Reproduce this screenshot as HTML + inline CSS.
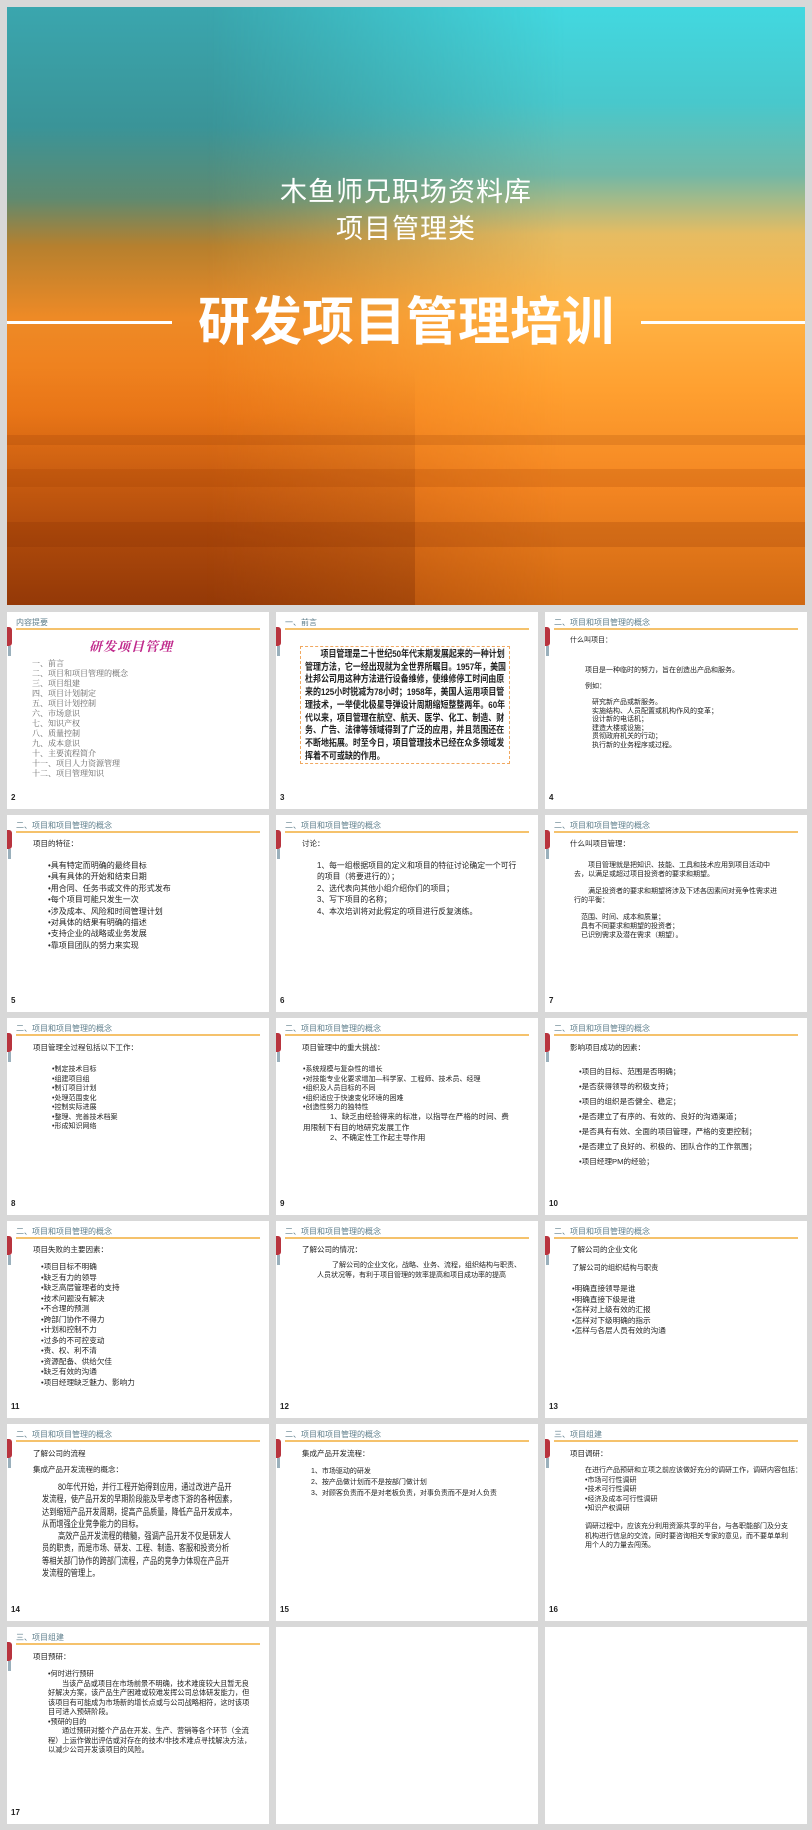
<!DOCTYPE html>
<html><head><meta charset="utf-8"><style>
*{margin:0;padding:0;box-sizing:border-box}
body{width:812px;height:1830px;background:#d8d8d8;position:relative;overflow:hidden;font-family:"Liberation Sans","Noto Sans CJK SC",sans-serif;color:#222}
#hero{position:absolute;left:7px;top:7px;width:798px;height:598px;overflow:hidden;
background:linear-gradient(180deg,#3aa6ae 0%,#3a9498 20%,#5f8a70 32%,#b6802e 40%,#ee8a26 52%,#f07a18 68%,#c85a10 85%,#a4420a 100%)}
#hero .tr{position:absolute;left:0;top:0;width:100%;height:100%;background:linear-gradient(180deg,#42d8e0 0%,#48c8cc 16%,#72b8a6 28%,#e6bc62 38%,#ffb446 50%,#ffa030 64%,#f48622 80%,#d06812 100%);
-webkit-mask-image:linear-gradient(90deg,transparent 25%,#000 70%);mask-image:linear-gradient(90deg,transparent 25%,#000 70%)}
#hero .dl{position:absolute;left:0;top:360px;width:408px;height:238px;background:linear-gradient(180deg,rgba(120,40,0,0),rgba(110,35,0,.3))}
.band{position:absolute;left:0;width:100%}
.sub{position:absolute;left:0;width:100%;text-align:center;color:#fff;font-size:27px;letter-spacing:1px}
.ttl{position:absolute;left:0;width:100%;text-align:center;color:#fff;font-size:52px;font-weight:bold;top:284px;line-height:64px}
.ln{position:absolute;top:314px;height:3px;background:#fff}
.s{position:absolute;width:262px;height:197px;background:#fff;overflow:hidden;font-size:8px;line-height:1}
.s .h{position:absolute;left:9px;top:7px;font-size:8px;color:#5f7f8c}
.s .bar{position:absolute;left:9px;top:16px;width:244px;height:2px;background:#f5c26c}
.s .d1{position:absolute;left:0;top:15px;width:5px;height:19px;background:#b8343e;border-radius:0 3px 3px 0}
.s .d2{position:absolute;left:1px;top:34px;width:3px;height:10px;background:#9ab0bc}
.s .n{position:absolute;left:4px;bottom:7px;font-size:8px;font-weight:bold}
.t{position:absolute;white-space:nowrap}
.p{position:absolute;white-space:normal}
.c{position:absolute;white-space:nowrap;transform-origin:0 0}
</style></head><body>
<div id="hero">
<div class="tr"></div>
<div class="dl"></div>
<div class="band" style="top:428px;height:10px;background:rgba(120,40,0,.15)"></div>
<div class="band" style="top:462px;height:18px;background:rgba(150,55,0,.18)"></div>
<div class="band" style="top:515px;height:25px;background:rgba(120,40,0,.18)"></div>
<div class="sub" style="top:163px">木鱼师兄职场资料库</div>
<div class="sub" style="top:200px">项目管理类</div>
<div class="ln" style="left:0;width:165px"></div>
<div class="ln" style="left:634px;width:164px"></div>
<div class="ttl">研发项目管理培训</div>
</div>

<div class="s" style="left:7px;top:612px"><div class="h">内容提要</div><div class="bar"></div><div class="d1"></div><div class="d2"></div>
<div class="t" style="left:82px;top:27px;font-size:13px;font-weight:bold;color:#c02a8c;font-family:'Noto Serif CJK SC',serif;font-style:italic;letter-spacing:1px">研发项目管理</div>
<div class="p" style="left:25px;top:47px;line-height:10px;color:#666;font-family:'Noto Serif CJK SC',serif">一、前言<br>二、项目和项目管理的概念<br>三、项目组建<br>四、项目计划制定<br>五、项目计划控制<br>六、市场意识<br>七、知识产权<br>八、质量控制<br>九、成本意识<br>十、主要流程简介<br>十一、项目人力资源管理<br>十二、项目管理知识</div>
<div class="n">2</div></div>

<div class="s" style="left:276px;top:612px"><div class="h">一、前言</div><div class="bar"></div><div class="d1"></div><div class="d2"></div>
<div style="position:absolute;left:24px;top:34px;width:210px;height:118px;border:1px dashed #f0a860"></div>
<div class="c" style="left:29px;top:36px;font-size:9.4px;line-height:12.7px;font-weight:bold;transform:scaleX(.85)">&nbsp;&nbsp;&nbsp;&nbsp;&nbsp;&nbsp;&nbsp;项目管理是二十世纪50年代末期发展起来的一种计划<br>管理方法，它一经出现就为全世界所瞩目。1957年，美国<br>杜邦公司用这种方法进行设备维修，使维修停工时间由原<br>来的125小时锐减为78小时；1958年，美国人运用项目管<br>理技术，一举使北极星导弹设计周期缩短整整两年。60年<br>代以来，项目管理在航空、航天、医学、化工、制造、财<br>务、广告、法律等领域得到了广泛的应用，并且范围还在<br>不断地拓展。时至今日，项目管理技术已经在众多领域发<br>挥着不可或缺的作用。</div>
<div class="n">3</div></div>

<div class="s" style="left:545px;top:612px"><div class="h">二、项目和项目管理的概念</div><div class="bar"></div><div class="d1"></div><div class="d2"></div>
<div class="t" style="left:25px;top:25px;font-size:7px">什么叫项目：</div>
<div class="t" style="left:40px;top:55px;font-size:7px">项目是一种临时的努力，旨在创造出产品和服务。</div>
<div class="t" style="left:40px;top:71px;font-size:7px">例如：</div>
<div class="p" style="left:47px;top:87px;font-size:7px;line-height:8.5px">研究新产品或新服务。<br>实施结构、人员配置或机构作风的变革；<br>设计新的电话机；<br>建造大楼或设施；<br>贯彻政府机关的行动；<br>执行新的业务程序或过程。</div>
<div class="n">4</div></div>

<div class="s" style="left:7px;top:815px"><div class="h">二、项目和项目管理的概念</div><div class="bar"></div><div class="d1"></div><div class="d2"></div>
<div class="t" style="left:26px;top:25px;font-size:7.5px">项目的特征：</div>
<div class="p" style="left:41px;top:45px;line-height:11.4px;font-size:8px">•具有特定而明确的最终目标<br>•具有具体的开始和结束日期<br>•用合同、任务书或文件的形式发布<br>•每个项目可能只发生一次<br>•涉及成本、风险和时间管理计划<br>•对具体的结果有明确的描述<br>•支持企业的战略或业务发展<br>•靠项目团队的努力来实现</div>
<div class="n">5</div></div>

<div class="s" style="left:276px;top:815px"><div class="h">二、项目和项目管理的概念</div><div class="bar"></div><div class="d1"></div><div class="d2"></div>
<div class="t" style="left:26px;top:25px;font-size:7.5px">讨论：</div>
<div class="p" style="left:41px;top:45px;line-height:11.4px;font-size:7.8px;width:205px">1、每一组根据项目的定义和项目的特征讨论确定一个可行的项目（将要进行的）；<br>2、选代表向其他小组介绍你们的项目；<br>3、写下项目的名称；<br>4、本次培训将对此假定的项目进行反复演练。</div>
<div class="n">6</div></div>

<div class="s" style="left:545px;top:815px"><div class="h">二、项目和项目管理的概念</div><div class="bar"></div><div class="d1"></div><div class="d2"></div>
<div class="t" style="left:25px;top:25px;font-size:7.5px">什么叫项目管理：</div>
<div class="p" style="left:29px;top:46px;width:205px;font-size:7px;line-height:9px;text-indent:14px">项目管理就是把知识、技能、工具和技术应用到项目活动中去，以满足或超过项目投资者的要求和期望。</div>
<div class="p" style="left:29px;top:72px;width:205px;font-size:7px;line-height:9px;text-indent:14px">满足投资者的要求和期望将涉及下述各因素间对竞争性需求进行的平衡：</div>
<div class="p" style="left:36px;top:98px;font-size:7px;line-height:9px">范围、时间、成本和质量；<br>具有不同要求和期望的投资者；<br>已识别需求及潜在需求（期望）。</div>
<div class="n">7</div></div>

<div class="s" style="left:7px;top:1018px"><div class="h">二、项目和项目管理的概念</div><div class="bar"></div><div class="d1"></div><div class="d2"></div>
<div class="t" style="left:26px;top:26px;font-size:7.5px">项目管理全过程包括以下工作：</div>
<div class="p" style="left:45px;top:47px;line-height:9.5px;font-size:7px">•制定技术目标<br>•组建项目组<br>•制订项目计划<br>•处理范围变化<br>•控制实际进展<br>•整理、完善技术档案<br>•形成知识网络</div>
<div class="n">8</div></div>

<div class="s" style="left:276px;top:1018px"><div class="h">二、项目和项目管理的概念</div><div class="bar"></div><div class="d1"></div><div class="d2"></div>
<div class="t" style="left:26px;top:26px;font-size:7.5px">项目管理中的重大挑战：</div>
<div class="p" style="left:27px;top:47px;line-height:9.5px;font-size:7px">•系统规模与复杂性的增长<br>•对技能专业化要求增加—科学家、工程师、技术员、经理<br>•组织及人员目标的不同<br>•组织适应于快速变化环境的困难<br>•创造性努力的独特性</div>
<div class="p" style="left:27px;top:94px;width:212px;line-height:10.5px;font-size:7.6px;text-indent:27px">1、缺乏由经验得来的标准，以指导在严格的时间、费用限制下有目的地研究发展工作</div>
<div class="t" style="left:54px;top:116px;font-size:7.6px">2、不确定性工作起主导作用</div>
<div class="n">9</div></div>

<div class="s" style="left:545px;top:1018px"><div class="h">二、项目和项目管理的概念</div><div class="bar"></div><div class="d1"></div><div class="d2"></div>
<div class="t" style="left:25px;top:26px;font-size:7.5px">影响项目成功的因素：</div>
<div class="p" style="left:34px;top:46px;line-height:15px;font-size:7.6px">•项目的目标、范围是否明确；<br>•是否获得领导的积极支持；<br>•项目的组织是否健全、稳定；<br>•是否建立了有序的、有效的、良好的沟通渠道；<br>•是否具有有效、全面的项目管理，严格的变更控制；<br>•是否建立了良好的、积极的、团队合作的工作氛围；<br>•项目经理PM的经验；</div>
<div class="n">10</div></div>

<div class="s" style="left:7px;top:1221px"><div class="h">二、项目和项目管理的概念</div><div class="bar"></div><div class="d1"></div><div class="d2"></div>
<div class="t" style="left:26px;top:25px;font-size:7.5px">项目失败的主要因素：</div>
<div class="p" style="left:34px;top:41px;line-height:10.5px;font-size:7.6px">•项目目标不明确<br>•缺乏有力的领导<br>•缺乏高层管理者的支持<br>•技术问题没有解决<br>•不合理的预测<br>•跨部门协作不得力<br>•计划和控制不力<br>•过多的不可控变动<br>•责、权、利不清<br>•资源配备、供给欠佳<br>•缺乏有效的沟通<br>•项目经理缺乏魅力、影响力</div>
<div class="n">11</div></div>

<div class="s" style="left:276px;top:1221px"><div class="h">二、项目和项目管理的概念</div><div class="bar"></div><div class="d1"></div><div class="d2"></div>
<div class="t" style="left:26px;top:25px;font-size:7.5px">了解公司的情况：</div>
<div class="p" style="left:41px;top:40px;width:205px;line-height:9.5px;font-size:7px;text-indent:15px">了解公司的企业文化，战略、业务、流程，组织结构与职责、人员状况等，有利于项目管理的效率提高和项目成功率的提高</div>
<div class="n">12</div></div>

<div class="s" style="left:545px;top:1221px"><div class="h">二、项目和项目管理的概念</div><div class="bar"></div><div class="d1"></div><div class="d2"></div>
<div class="t" style="left:25px;top:25px;font-size:7.5px">了解公司的企业文化</div>
<div class="t" style="left:27px;top:43px;font-size:7.2px">了解公司的组织结构与职责</div>
<div class="p" style="left:27px;top:63px;line-height:10.5px;font-size:7.6px">•明确直接领导是谁<br>•明确直接下级是谁<br>•怎样对上级有效的汇报<br>•怎样对下级明确的指示<br>•怎样与各层人员有效的沟通</div>
<div class="n">13</div></div>

<div class="s" style="left:7px;top:1424px"><div class="h">二、项目和项目管理的概念</div><div class="bar"></div><div class="d1"></div><div class="d2"></div>
<div class="t" style="left:26px;top:26px;font-size:7.5px">了解公司的流程</div>
<div class="t" style="left:26px;top:42px;font-size:7.5px">集成产品开发流程的概念：</div>
<div class="c" style="left:35px;top:57px;font-size:9px;line-height:12.3px;transform:scaleX(.8)">&nbsp;&nbsp;&nbsp;&nbsp;&nbsp;&nbsp;&nbsp;&nbsp;80年代开始，并行工程开始得到应用，通过改进产品开<br>发流程，使产品开发的早期阶段能及早考虑下游的各种因素，<br>达到缩短产品开发周期，提高产品质量，降低产品开发成本，<br>从而增强企业竞争能力的目标。<br>&nbsp;&nbsp;&nbsp;&nbsp;&nbsp;&nbsp;&nbsp;&nbsp;高效产品开发流程的精髓，强调产品开发不仅是研发人<br>员的职责，而是市场、研发、工程、制造、客服和投资分析<br>等相关部门协作的跨部门流程，产品的竞争力体现在产品开<br>发流程的管理上。</div>
<div class="n">14</div></div>

<div class="s" style="left:276px;top:1424px"><div class="h">二、项目和项目管理的概念</div><div class="bar"></div><div class="d1"></div><div class="d2"></div>
<div class="t" style="left:26px;top:26px;font-size:7.5px">集成产品开发流程：</div>
<div class="p" style="left:35px;top:42px;line-height:11px;font-size:7px">1、市场驱动的研发<br>2、按产品做计划而不是按部门做计划<br>3、对顾客负责而不是对老板负责，对事负责而不是对人负责</div>
<div class="n">15</div></div>

<div class="s" style="left:545px;top:1424px"><div class="h">三、项目组建</div><div class="bar"></div><div class="d1"></div><div class="d2"></div>
<div class="t" style="left:25px;top:26px;font-size:7.5px">项目调研：</div>
<div class="p" style="left:40px;top:42px;line-height:9.5px;font-size:7px">在进行产品预研和立项之前应该做好充分的调研工作，调研内容包括：<br>•市场可行性调研<br>•技术可行性调研<br>•经济及成本可行性调研<br>•知识产权调研</div>
<div class="p" style="left:40px;top:98px;width:205px;line-height:9.5px;font-size:7px">调研过程中，应该充分利用资源共享的平台，与各职能部门及分支机构进行信息的交流，同时要咨询相关专家的意见，而不要单单利用个人的力量去闯荡。</div>
<div class="n">16</div></div>

<div class="s" style="left:7px;top:1627px"><div class="h">三、项目组建</div><div class="bar"></div><div class="d1"></div><div class="d2"></div>
<div class="t" style="left:26px;top:26px;font-size:7.5px">项目预研：</div>
<div class="p" style="left:41px;top:42px;width:206px;line-height:9.5px;font-size:7.2px">•何时进行预研<br>&nbsp;&nbsp;&nbsp;&nbsp;&nbsp;&nbsp;&nbsp;当该产品或项目在市场前景不明确，技术难度较大且暂无良好解决方案，该产品生产困难或较难发挥公司总体研发能力，但该项目有可能成为市场新的增长点或与公司战略相符，这时该项目可进入预研阶段。<br>•预研的目的<br>&nbsp;&nbsp;&nbsp;&nbsp;&nbsp;&nbsp;&nbsp;通过预研对整个产品在开发、生产、营销等各个环节（全流程）上运作做出评估或对存在的技术/非技术难点寻找解决方法，以减少公司开发该项目的风险。</div>
<div class="n">17</div></div>
<div class="s" style="left:276px;top:1627px"></div>
<div class="s" style="left:545px;top:1627px"></div>
</body></html>
